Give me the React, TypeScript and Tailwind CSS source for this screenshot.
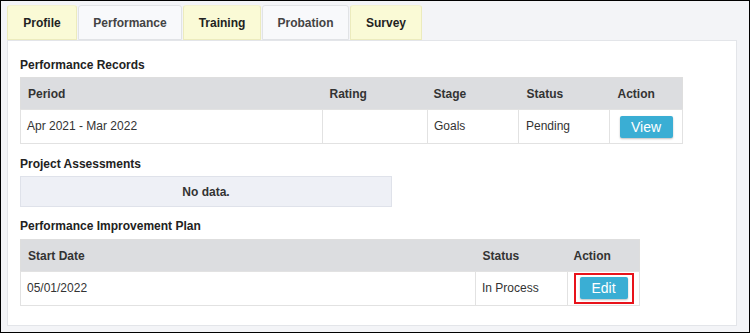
const tabs = [
  { label: "Profile", w: "w-[70px]", active: false },
  { label: "Performance", w: "w-[104px]", active: true },
  { label: "Training", w: "w-[78px]", active: false },
  { label: "Probation", w: "w-[87px]", active: true },
  { label: "Survey", w: "w-[72px]", active: false },
];

function Heading({ children, className = "" }: { children: string; className?: string }) {
  return <div className={"text-[12px] leading-[16px] font-bold text-[#222] " + className}>{children}</div>;
}

function Btn({ children, w }: { children: string; w: string }) {
  return (
    <button className={"h-[22px] rounded-[2px] bg-[#3aaed4] text-[14px] leading-[22px] text-white shadow-[0_1px_2px_rgba(0,0,0,0.25)] " + w}>
      {children}
    </button>
  );
}

export default function App() {
  return (
    <div className="w-[750px] h-[333px] border border-black bg-[#f3f4f7] flex flex-col pl-[6px] pr-[12px] pt-[4px] pb-[6px] font-['Liberation_Sans',Arial,sans-serif] text-[#333]">
      <div className="flex gap-[1px] h-[35px]">
        {tabs.map((t) => (
          <div
            key={t.label}
            className={
              "h-[35px] flex items-center justify-center text-[12px] font-bold rounded-t-[3px] border " +
              t.w +
              (t.active
                ? " bg-[#f8f9fb] border-[#e1e3e6] text-[#444]"
                : " bg-[#fafad6] border-[#ecebbd] border-t-[#f3f2d2] text-[#222]")
            }
          >
            {t.label}
          </div>
        ))}
      </div>
      <div className="flex-1 bg-white border border-[#e3e5e9] px-[12px] pt-[16px]">
        <Heading className="mb-[4px]">Performance Records</Heading>
        <table className="table-fixed border-collapse w-[662px] text-[12px] border border-[#dedede]">
          <colgroup>
            <col className="w-[302px]" />
            <col className="w-[105px]" />
            <col className="w-[91px]" />
            <col className="w-[91px]" />
            <col className="w-[73px]" />
          </colgroup>
          <thead>
            <tr className="bg-[#dcdde0] h-[32px]">
              <th className="text-left font-bold px-[7px]">Period</th>
              <th className="text-left font-bold px-[7px]">Rating</th>
              <th className="text-left font-bold px-[6px]">Stage</th>
              <th className="text-left font-bold px-[8px]">Status</th>
              <th className="text-left font-bold px-[8px]">Action</th>
            </tr>
          </thead>
          <tbody>
            <tr className="h-[34px]">
              <td className="px-[6px] pb-[2px] border border-[#e2e2e2]">Apr 2021 - Mar 2022</td>
              <td className="border border-[#e2e2e2]"></td>
              <td className="px-[6px] pb-[2px] border border-[#e2e2e2]">Goals</td>
              <td className="px-[7px] pb-[2px] border border-[#e2e2e2]">Pending</td>
              <td className="border border-[#e2e2e2] text-center">
                <Btn w="w-[53px]">View</Btn>
              </td>
            </tr>
          </tbody>
        </table>

        <Heading className="mt-[12px] mb-[4px]">Project Assessments</Heading>
        <div className="w-[372px] h-[31px] bg-[#eef0f6] border border-[#dfe2ea] flex items-center justify-center text-[12px] font-bold">
          No data.
        </div>

        <Heading className="mt-[11px] mb-[5px]">Performance Improvement Plan</Heading>
        <table className="table-fixed border-collapse w-[619px] text-[12px] border border-[#dedede]">
          <colgroup>
            <col className="w-[455px]" />
            <col className="w-[92px]" />
            <col className="w-[72px]" />
          </colgroup>
          <thead>
            <tr className="bg-[#dcdde0] h-[32px]">
              <th className="text-left font-bold px-[7px]">Start Date</th>
              <th className="text-left font-bold px-[7px]">Status</th>
              <th className="text-left font-bold px-[6px]">Action</th>
            </tr>
          </thead>
          <tbody>
            <tr className="h-[34px]">
              <td className="px-[6px] pb-[2px] border border-[#e2e2e2]">05/01/2022</td>
              <td className="px-[6px] pb-[2px] border border-[#e2e2e2]">In Process</td>
              <td className="border border-[#e2e2e2]">
                <div className="flex justify-center">
                  <div className="border-2 border-[#e8131b] px-[4px] pt-[2px] pb-[3px] flex">
                    <Btn w="w-[48px]">Edit</Btn>
                  </div>
                </div>
              </td>
            </tr>
          </tbody>
        </table>
      </div>
    </div>
  );
}
